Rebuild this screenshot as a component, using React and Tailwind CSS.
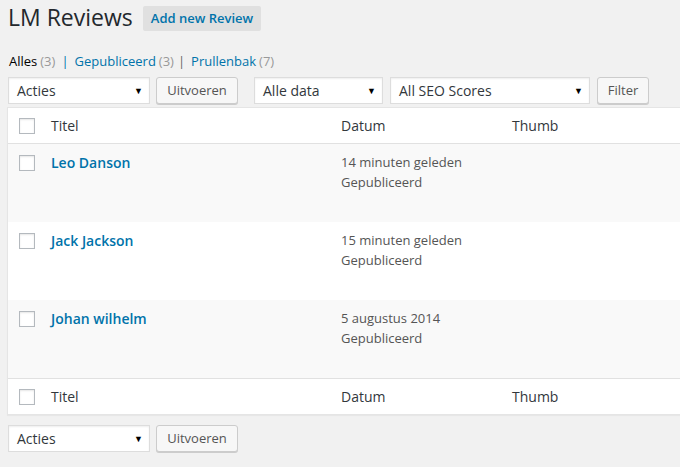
import React from 'react';

const reviews = [
  { id: 1, name: 'Leo Danson', date: '14 minuten geleden', status: 'Gepubliceerd' },
  { id: 2, name: 'Jack Jackson', date: '15 minuten geleden', status: 'Gepubliceerd' },
  { id: 3, name: 'Johan wilhelm', date: '5 augustus 2014', status: 'Gepubliceerd' },
];

const SelectBox = ({ label, width }) => (
  <div className={`${width} h-[27px] bg-white border border-[#dddddd] flex items-center justify-between pl-[8px] pr-[6px] shadow-[inset_0_1px_2px_rgba(0,0,0,0.07)]`}>
    <span className="text-[14px] text-[#32373c]">{label}</span>
    <span className="text-[9px] text-black leading-none">▼</span>
  </div>
);

const Button = ({ children, width }) => (
  <div className={`${width} h-[27px] bg-[#f7f7f7] border border-[#cccccc] rounded-[3px] shadow-[0_1px_0_#cccccc] flex items-center justify-center text-[13px] text-[#555555]`}>
    {children}
  </div>
);

const Checkbox = () => (
  <div className="w-[16px] h-[16px] border border-[#b4b9be] bg-white shadow-[inset_0_1px_2px_rgba(0,0,0,0.1)]" />
);

const HeaderRow = ({ bottom }) => (
  <div className={`flex items-center h-[36px] text-[14px] text-[#32373c] ${bottom ? 'border-t border-[#e1e1e1]' : 'border-b border-[#e1e1e1]'}`}>
    <div className="w-[43px] pl-[11px] flex items-center">
      <Checkbox />
    </div>
    <div className="w-[290px]">Titel</div>
    <div className="w-[171px]">Datum</div>
    <div>Thumb</div>
  </div>
);

export default function App() {
  return (
    <div className="w-[680px] h-[467px] overflow-hidden bg-[#f1f1f1] font-['Open_Sans',sans-serif] text-[#444444]">
      <div className="flex items-center gap-[10px] pl-[8px] pt-[5px]">
        <h1 className="text-[23px] text-[#23282d] leading-[25px] pb-[2px]">LM Reviews</h1>
        <div className="h-[25px] px-[8px] bg-[#e0e0e0] rounded-[2px] flex items-center text-[13px] font-semibold text-[#0073aa]">
          Add new Review
        </div>
      </div>

      <div className="flex items-center pl-[9px] mt-[20px] h-[20px] text-[13px]">
        <span className="text-black font-medium">Alles</span>
        <span className="text-[#999999] ml-[3px]">(3)</span>
        <span className="text-[#0073aa] ml-[6px] mr-[6px]">|</span>
        <span className="text-[#0073aa]">Gepubliceerd</span>
        <span className="text-[#999999] ml-[3px]">(3)</span>
        <span className="text-[#666666] ml-[4px] mr-[6px]">|</span>
        <span className="text-[#0073aa]">Prullenbak</span>
        <span className="text-[#999999] ml-[3px]">(7)</span>
      </div>

      <div className="flex items-center pl-[8px] mt-[5px]">
        <SelectBox label="Acties" width="w-[142px]" />
        <div className="ml-[6px]"><Button width="w-[82px]">Uitvoeren</Button></div>
        <div className="ml-[16px]"><SelectBox label="Alle data" width="w-[129px]" /></div>
        <div className="ml-[7px]"><SelectBox label="All SEO Scores" width="w-[200px]" /></div>
        <div className="ml-[7px]"><Button width="w-[52px]">Filter</Button></div>
      </div>

      <div className="ml-[7px] mt-[3px] w-[700px] bg-white border border-[#e5e5e5] shadow-[0_1px_1px_rgba(0,0,0,0.04)]">
        <HeaderRow />
        {reviews.map((r, i) => (
          <div key={r.id} className={`flex items-start h-[78px] pt-[10px] ${i % 2 === 0 ? 'bg-[#f9f9f9]' : 'bg-white'}`}>
            <div className="w-[43px] pl-[11px] pt-[1px]">
              <Checkbox />
            </div>
            <div className="w-[290px] text-[14px] font-semibold text-[#0073aa] leading-[18px]">{r.name}</div>
            <div className="text-[13px] text-[#555555] leading-[20px] -mt-[2px]">
              <div>{r.date}</div>
              <div>{r.status}</div>
            </div>
          </div>
        ))}
        <HeaderRow bottom />
      </div>

      <div className="flex items-center pl-[8px] mt-[10px]">
        <SelectBox label="Acties" width="w-[142px]" />
        <div className="ml-[6px]"><Button width="w-[82px]">Uitvoeren</Button></div>
      </div>
    </div>
  );
}
